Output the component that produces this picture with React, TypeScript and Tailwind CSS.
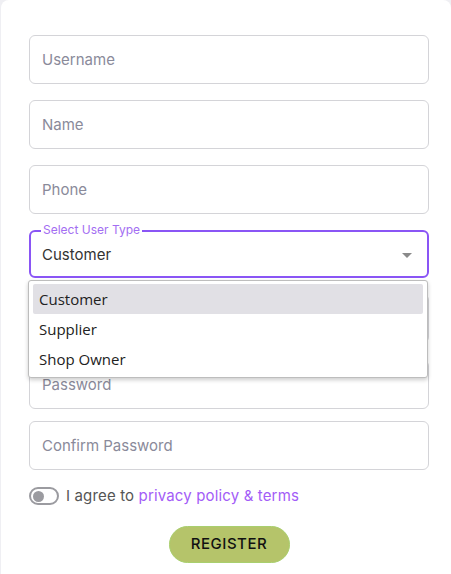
import React from 'react';

const fieldCls =
  'h-[49px] w-[400px] rounded-md border border-[#d4d4d8] bg-white px-[12px] text-[15px] text-[#333] placeholder:text-[#8a8a9a] outline-none';

const Field: React.FC<{ placeholder: string; type?: string; className?: string }> = ({
  placeholder,
  type = 'text',
  className = '',
}) => <input type={type} placeholder={placeholder} className={`${fieldCls} ${className}`} />;

export default function App() {
  const options = ['Customer', 'Supplier', 'Shop Owner'];

  return (
    <div className="min-h-[574px] w-[451px] bg-[#efeff3] pl-[1px]" style={{ fontFamily: 'Inter, "Liberation Sans", sans-serif' }}>
      <div className="relative min-h-[574px] rounded-t-lg bg-white pl-[28px] pt-[35px]">
        <div className="flex flex-col">
          <Field placeholder="Username" />
          <Field placeholder="Name" className="mt-[16px]" />
          <Field placeholder="Phone" className="mt-[16px]" />

          {/* select with floating label */}
          <div className="relative mt-[16px] h-[48px] w-[400px] rounded-md border-2 border-[#8a55f5]">
            <span className="absolute -top-[9px] left-[10px] bg-white px-[2px] text-[12px] leading-[14px] text-[#a36ef2]">
              Select User Type
            </span>
            <div className="flex h-full items-center justify-between pl-[11px] pr-[15px] pt-[2px]">
              <span className="text-[15px] text-[#333]">Customer</span>
              <svg width="10" height="5" viewBox="0 0 10 5">
                <path d="M0 0h10L5 5z" fill="#8a8a8a" />
              </svg>
            </div>
          </div>

          <Field placeholder="Email" type="email" className="mt-[16px]" />
          <Field placeholder="Password" type="password" className="mt-[17px]" />
          <Field placeholder="Confirm Password" type="password" className="mt-[12px]" />

          <div className="mt-[15px] flex items-center gap-[7px]">
            <div className="flex h-[18px] w-[30px] items-center rounded-full border-2 border-[#9b9ba0] bg-white pl-[2px]">
              <div className="h-[11px] w-[11px] rounded-full bg-[#9b9ba0]" />
            </div>
            <span className="text-[15px] tracking-[0.15px] text-[#555]">
              I agree to <span className="text-[#a35cf7]">privacy policy &amp; terms</span>
            </span>
          </div>

          <div className="mt-[18px] flex w-[400px] justify-center">
            <button className="h-[37px] w-[121px] rounded-full border border-[#a9cf6e] bg-[#b5c46a] text-[15px] font-medium tracking-[0.5px] text-[#111]">
              REGISTER
            </button>
          </div>
        </div>

        {/* open dropdown list */}
        <div
          className="absolute left-[27px] top-[280px] w-[400px] rounded-[3px] border border-[#bdbdbd] bg-white px-[4px] py-[3px] shadow-[0_2px_4px_rgba(0,0,0,0.2)]"
          style={{ fontFamily: '"Open Sans", "Noto Sans", sans-serif' }}
        >
          {options.map((o, i) => (
            <div
              key={o}
              className={`flex h-[30px] items-center rounded-[2px] px-[6px] text-[15px] text-[#222] ${i === 0 ? 'bg-[#e1e0e5]' : ''}`}
            >
              {o}
            </div>
          ))}
        </div>
      </div>
    </div>
  );
}
